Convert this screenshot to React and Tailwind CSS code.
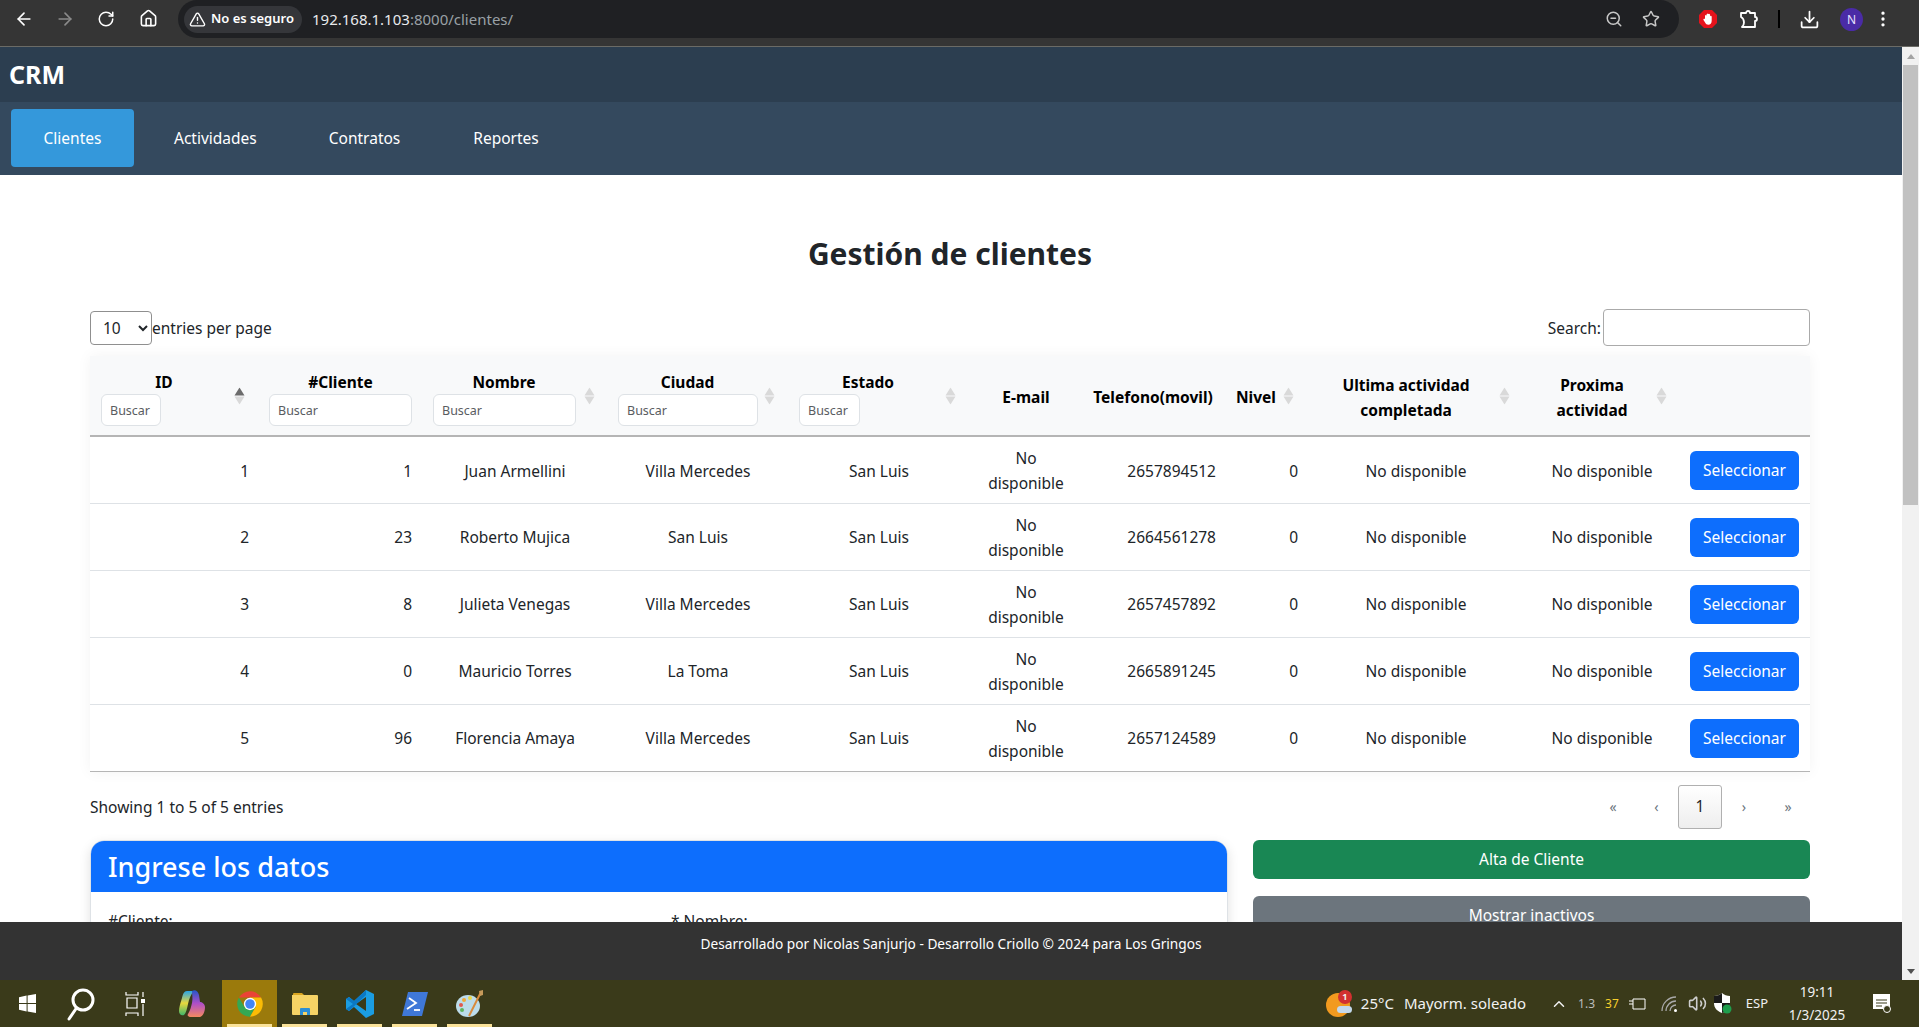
import React from "react";
import { ArrowLeft, ArrowRight, RotateCw, Home, TriangleAlert, ZoomOut, Star, Download, EllipsisVertical, ChevronUp, Volume2 } from "lucide-react";

const clients = [
  { id: 1, num: 1, name: "Juan Armellini", city: "Villa Mercedes", phone: "2657894512" },
  { id: 2, num: 23, name: "Roberto Mujica", city: "San Luis", phone: "2664561278" },
  { id: 3, num: 8, name: "Julieta Venegas", city: "Villa Mercedes", phone: "2657457892" },
  { id: 4, num: 0, name: "Mauricio Torres", city: "La Toma", phone: "2665891245" },
  { id: 5, num: 96, name: "Florencia Amaya", city: "Villa Mercedes", phone: "2657124589" },
];

function SortIcon({ active, right = "right-[12px]" }) {
  return (
    <svg width="11" height="17" viewBox="0 0 11 17" className={`absolute ${right} top-1/2 -translate-y-1/2`}>
      <path d="M5.5 0 L10.5 8 L0.5 8 Z" fill={active ? "#6c6c6c" : "#d9d9d9"} />
      <path d="M5.5 17 L10.5 9 L0.5 9 Z" fill="#d9d9d9" />
    </svg>
  );
}

function FilterHead({ label, inputW, pl, pr = "pr-[34px]", sort, active, right }) {
  return (
    <th className={`relative ${pl} ${pr} align-top pt-[14px] font-bold`}>
      <div className="leading-[24px] text-center">{label}</div>
      <input placeholder="Buscar" className={`block ${inputW} h-[32px] bg-white border border-[#dee2e6] rounded-[6px] px-[8px] text-[12.5px] font-normal placeholder:text-[#595c5f]`} />
      {sort && <SortIcon active={active} right={right} />}
    </th>
  );
}

function TextHead({ children, sort, right }) {
  return (
    <th className={`relative font-bold pl-[10px] pt-[4px] leading-[25px] align-middle ${sort ? "pr-[30px]" : "pr-[10px]"}`}>
      {children}
      {sort && <SortIcon right={right} />}
    </th>
  );
}

function ChromeBar() {
  return (
    <div className="h-[47px] shrink-0 flex bg-[#353535] border-b border-[#6b6b66] text-white">
      <div className="flex items-start pt-[9px] w-[178px]">
        <ArrowLeft size={20} className="ml-[14px]" />
        <ArrowRight size={20} className="ml-[21px] text-[#8a8a8a]" />
        <RotateCw size={18} className="ml-[22px] mt-px" />
        <Home size={19} className="ml-[24px]" />
      </div>
      <div className="w-[1501px] h-[38px] bg-[#1f2023] rounded-[19px] flex items-center pl-[6px] pr-[19px]">
        <div className="h-[27px] w-[118px] rounded-[14px] bg-[#35363a] flex items-center pl-[5px] gap-[5px] text-[13px] font-semibold">
          <TriangleAlert size={17} />
          <span>No es seguro</span>
        </div>
        <div className="ml-[10px] text-[15px] text-[#e8eaed]">
          192.168.1.103<span className="text-[#9aa0a6]">:8000/clientes/</span>
        </div>
        <ZoomOut size={18} className="ml-auto text-[#c7c7c7]" />
        <Star size={18} className="ml-[19px] text-[#c7c7c7]" />
      </div>
      <div className="flex-1 flex items-start pt-[9px] relative">
        <svg width="20" height="20" viewBox="0 0 20 20" className="ml-[19px]">
          <path d="M6 1h8l5 5v8l-5 5H6l-5-5V6z" fill="#e5131c" />
          <path d="M7 10V7a1 1 0 0 1 1.6-.6V5.3a1 1 0 0 1 1.8-.2 1 1 0 0 1 1.7.8v1.3a1 1 0 0 1 1.6.6v4c0 2.5-1.4 4-3.4 4-1.6 0-2.4-.8-3.2-2.2L5.5 11c-.5-1 .8-1.6 1.5-1z" fill="#fff" />
        </svg>
        <svg width="20" height="20" viewBox="0 0 20 20" fill="none" stroke="#fff" strokeWidth="1.8" strokeLinejoin="round" className="ml-[21px]">
          <path d="M2 4h5a2 2 0 0 1 4 0h5v4a2 2 0 0 1 0 4v6H3c1-1 2-3 2-4.500C5 11.500 4 9 2 8z" />
        </svg>
        <div className="w-[2px] h-[18px] bg-black ml-[19px] mt-[1px]" />
        <Download size={21} className="ml-[19px]" />
        <div className="ml-[20px] -mt-[1px] w-[23px] h-[23px] rounded-full bg-[#4a2ba6] flex items-center justify-center text-[12px] text-[#e6e0ff]">N</div>
        <EllipsisVertical size={20} className="ml-[10px]" />
      </div>
    </div>
  );
}

function Scrollbar() {
  return (
    <div className="w-[17px] shrink-0 bg-[#f1f1f1] flex flex-col items-center">
      <div className="h-[18px] flex items-center justify-center">
        <div className="w-0 h-0 border-x-[4px] border-x-transparent border-b-[5px] border-b-[#a3a3a3]" />
      </div>
      <div className="w-[15px] h-[440px] bg-[#c1c1c1]" />
      <div className="mt-auto h-[18px] flex items-center justify-center">
        <div className="w-0 h-0 border-x-[4px] border-x-transparent border-t-[5px] border-t-[#505050]" />
      </div>
    </div>
  );
}

function Table() {
  return (
    <div className="shadow-[0_0_14px_rgba(0,0,0,0.05)]">
      <table className="table-fixed w-full border-collapse text-[15.5px] text-[#212529]">
        <colgroup>
          <col className="w-[167px]" />
          <col className="w-[164px]" />
          <col className="w-[188px]" />
          <col className="w-[178px]" />
          <col className="w-[184px]" />
          <col className="w-[110px]" />
          <col className="w-[144px]" />
          <col className="w-[82px]" />
          <col className="w-[218px]" />
          <col className="w-[154px]" />
          <col className="w-[131px]" />
        </colgroup>
        <thead>
          <tr className="h-[80px] bg-[#f8f9fa] border-b-2 border-[#b5b5b5] text-black">
            <FilterHead label="ID" inputW="w-[60px]" pl="pl-[11px]" pr="pr-[30px]" sort active />
            <FilterHead label="#Cliente" inputW="w-[143px]" pl="pl-[12px]" pr="pr-[9px]" />
            <FilterHead label="Nombre" inputW="w-[143px]" pl="pl-[12px]" sort right="right-[14px]" />
            <FilterHead label="Ciudad" inputW="w-[140px]" pl="pl-[9px]" pr="pr-[30px]" sort />
            <FilterHead label="Estado" inputW="w-[61px]" pl="pl-[12px]" sort right="right-[15px]" />
            <TextHead>E-mail</TextHead>
            <TextHead>Telefono(movil)</TextHead>
            <TextHead sort right="right-[13px]">Nivel</TextHead>
            <TextHead sort right="right-[15px]">Ultima actividad completada</TextHead>
            <TextHead sort>Proxima actividad</TextHead>
            <th></th>
          </tr>
        </thead>
        <tbody>
          {clients.map((c) => (
            <tr key={c.id} className="h-[67px] border-b border-[#dee2e6] last:border-[#b5b5b5] text-center">
              <td className="px-[8px] pt-[3px] text-right">{c.id}</td>
              <td className="px-[9px] pt-[3px] text-right">{c.num}</td>
              <td className="px-[9px] pt-[3px]">{c.name}</td>
              <td className="px-[9px] pt-[3px]">{c.city}</td>
              <td className="px-[9px] pt-[3px]">San Luis</td>
              <td className="px-[9px] pt-[2px] leading-[24.5px]">No disponible</td>
              <td className="px-[9px] pt-[3px] text-right">{c.phone}</td>
              <td className="px-[9px] pt-[3px] text-right">0</td>
              <td className="px-[9px] pt-[3px]">No disponible</td>
              <td className="px-[9px] pt-[3px]">No disponible</td>
              <td className="px-[10px] pt-[2px]">
                <button className="w-[109px] h-[39px] rounded-[6px] bg-[#0d6efd] text-white">Seleccionar</button>
              </td>
            </tr>
          ))}
        </tbody>
      </table>
    </div>
  );
}

function Pagination() {
  return (
    <div className="flex items-center text-[#6c757d] text-[14px]">
      <span className="w-[44px] text-center">«</span>
      <span className="w-[43px] text-center">‹</span>
      <span className="w-[44px] h-[44px] flex items-center justify-center border border-[#b0b0b0] rounded-[3px] bg-gradient-to-b from-white to-[#eeeeee] text-[#212529] text-[15.5px]">1</span>
      <span className="w-[44px] text-center">›</span>
      <span className="w-[44px] text-center">»</span>
    </div>
  );
}

function Page() {
  return (
    <div className="flex-1 min-h-0 overflow-hidden pl-[90px] pr-[92px] pt-[60px] text-[#212529]">
      <h1 className="text-[30px] leading-[38px] font-bold text-center">Gestión de clientes</h1>
      <div className="mt-[36px] h-[37px] flex items-center justify-between text-[15.5px]">
        <div className="flex items-center">
          <select className="w-[62px] h-[34px] px-[8px] bg-white border border-[#8f8f8f] rounded-[4px]">
            <option>10</option>
          </select>
          <span className="pt-[2px]">entries per page</span>
        </div>
        <div className="flex items-center gap-[2px]">
          <span className="pt-[2px]">Search:</span>
          <input className="w-[207px] h-[37px] border border-[#aaaaaa] rounded-[4px] bg-white" />
        </div>
      </div>
      <div className="mt-[10px]">
        <Table />
      </div>
      <div className="mt-[13px] flex items-center justify-between text-[15.5px]">
        <span className="pt-[2px]">Showing 1 to 5 of 5 entries</span>
        <Pagination />
      </div>
      <div className="mt-[11px] grid grid-cols-[1138px_557px] gap-[25px]">
        <div className="rounded-[14px] border border-[#dee2e6] shadow-[0_4px_12px_rgba(0,0,0,0.12)] overflow-hidden">
          <div className="h-[51px] pt-[2px] bg-[#0d6efd] text-white text-[27px] font-medium flex items-center px-[17px]">Ingrese los datos</div>
          <div className="grid grid-cols-2 px-[17px] pt-[18px] text-[15.5px]">
            <label>#Cliente:</label>
            <label className="pl-[12px]">* Nombre:</label>
          </div>
        </div>
        <div className="flex flex-col gap-[17px] text-white text-[15.5px]">
          <button className="h-[39px] pt-[2px] rounded-[6px] bg-[#198754]">Alta de Cliente</button>
          <button className="h-[39px] pt-[2px] rounded-[6px] bg-[#6c757d]">Mostrar inactivos</button>
        </div>
      </div>
    </div>
  );
}

function Taskbar() {
  const cls = "w-[55px] h-[47px] flex items-center justify-center relative";
  const bar = <div className="absolute bottom-0 left-[5px] right-[5px] h-[3px] bg-[#fbe39a]" />;
  return (
    <div className="h-[47px] shrink-0 bg-[#3a3a1a] flex items-center text-white">
      <div className="w-[54px] flex justify-center">
        <svg width="17" height="19" viewBox="0 0 17 19" fill="#fff">
          <path d="M0 3.2 7.6 1.6V9H0zM8.6 1.4 17 0v9H8.6zM0 10h7.6v7.4L0 15.8zM8.6 10H17v9l-8.4-1.4z" />
        </svg>
      </div>
      <div className="w-[54px] flex justify-center">
        <svg width="28" height="34" viewBox="0 0 28 34" fill="none" stroke="#fff" strokeWidth="3">
          <circle cx="16" cy="13" r="10" />
          <path d="M9.5 21 2 32" strokeLinecap="round" />
        </svg>
      </div>
      <div className="w-[54px] flex justify-center">
        <svg width="20" height="24" viewBox="0 0 20 24" fill="none" stroke="#fff" strokeWidth="1.2">
          <path d="M1 0v3h12V0M2 6h10v10H2zM1 24v-3h12v3M18 0v5M18 12v12" />
          <rect x="16" y="7" width="4" height="4" fill="#fff" stroke="none" />
        </svg>
      </div>
      <div className="w-[60px] flex justify-center">
        <svg width="28" height="30" viewBox="0 0 28 30">
          <defs>
            <linearGradient id="cpA" x1="0" y1="0" x2="0" y2="1">
              <stop offset="0" stopColor="#2aa5e8" />
              <stop offset="0.5" stopColor="#e8d83c" />
              <stop offset="1" stopColor="#3fb56c" />
            </linearGradient>
            <linearGradient id="cpB" x1="0" y1="0" x2="0" y2="1">
              <stop offset="0" stopColor="#2456c9" />
              <stop offset="0.5" stopColor="#b04fc7" />
              <stop offset="1" stopColor="#f4895f" />
            </linearGradient>
          </defs>
          <path d="M9 2h7c-3 3-5 8-6 13-1 5-2 9-4 11-3 1-5-1-5-4 0-3 1-7 3-13 1-4 2-7 5-7z" fill="url(#cpA)" />
          <path d="M14 2c3-2 6 0 7 4l1 7c2 0 5 2 5 5 0 5-2 9-5 10h-9c-3 0-4-2-3-3 2-3 3-7 4-11 1-5 0-9 0-12z" fill="url(#cpB)" />
        </svg>
      </div>
      <div className={`${cls} bg-[#9b7a0c]`}>
        <svg width="28" height="28" viewBox="0 0 24 24">
          <path d="M2.5 6.500A11 11 0 0 1 21.500 6.500L12 6.500Z" fill="#ea4335" />
          <path d="M2.5 6.500A11 11 0 0 0 12 23L16.800 14.500 7.200 14.500Z" fill="#34a853" />
          <path d="M21.500 6.500A11 11 0 0 1 12 23L16.800 14.500 12 6.500Z" fill="#fbbc05" />
          <circle cx="12" cy="12" r="5.300" fill="#fff" />
          <circle cx="12" cy="12" r="4.100" fill="#4285f4" />
        </svg>
        {bar}
      </div>
      <div className={cls}>
        <svg width="26" height="24" viewBox="0 0 26 24">
          <path d="M1 2a1 1 0 0 1 1-1h8l2 2h-11z" fill="#d9a520" />
          <path d="M0 3h25a1 1 0 0 1 1 1v18a1 1 0 0 1-1 1H1a1 1 0 0 1-1-1z" fill="#f6d365" />
          <path d="M8 23v-6a1 1 0 0 1 1-1h8a1 1 0 0 1 1 1v6h-3v-3h-4v3z" fill="#2d8fd5" />
        </svg>
        {bar}
      </div>
      <div className={cls}>
        <svg width="30" height="30" viewBox="0 0 30 30">
          <path d="M21 1 29 5V25L21 29 9 18 4 22 1 20V10L4 8 9 12z" fill="#1b9de2" />
          <path d="M21 8V22L11 15z" fill="#3a3a1a" />
          <path d="M21 1 9 12 4 8 1 10 8 15 1 20 4 22 21 6z" fill="#0b78c4" />
        </svg>
        {bar}
      </div>
      <div className={cls}>
        <svg width="28" height="26" viewBox="0 0 28 26">
          <path d="M7 1h20L21 25H1z" fill="#3f78d8" />
          <path d="M8 7l7 5-9 6" fill="none" stroke="#fff" strokeWidth="1.800" />
          <path d="M13 19h6" stroke="#fff" strokeWidth="1.800" />
        </svg>
        {bar}
      </div>
      <div className={cls}>
        <svg width="28" height="30" viewBox="0 0 28 30">
          <ellipse cx="12" cy="17" rx="12" ry="11" fill="#bcdcea" />
          <circle cx="5" cy="16" r="2" fill="#e05a4f" />
          <circle cx="8" cy="11" r="2" fill="#f0a93a" />
          <circle cx="14" cy="9" r="2" fill="#e9d84a" />
          <circle cx="6" cy="21" r="2" fill="#5fb55f" />
          <path d="M25 3 13 27" stroke="#d98a3c" strokeWidth="2" />
          <path d="M23 2l4-1 0 5-3 1z" fill="#c69a5a" />
        </svg>
        {bar}
      </div>
      <div className="ml-auto flex items-center text-[15px] text-[#f1f1f1]">
        <div className="relative w-[26px] h-[28px] mr-[9px]">
          <div className="absolute left-0 top-[3px] w-[24px] h-[24px] rounded-full bg-[#f29a1f]" />
          <div className="absolute right-0 bottom-[5px] w-[15px] h-[7px] rounded-full bg-[#c4d9ec]" />
          <div className="absolute right-0 top-0 w-[14px] h-[14px] rounded-full bg-[#d23030] text-[9px] font-bold flex items-center justify-center">1</div>
        </div>
        <span>25°C</span>
        <span className="ml-[10px]">Mayorm. soleado</span>
        <ChevronUp size={18} className="ml-[24px]" />
        <span className="ml-[10px] text-[12px] text-[#bdbdbd]">1.3</span>
        <span className="ml-[10px] text-[12px] text-[#f6cf2c]">37</span>
        <svg width="18" height="12" viewBox="0 0 18 12" fill="none" stroke="#fff" className="ml-[9px]">
          <path d="M5 1h12v10H5zM5 3H1M5 6H1" />
        </svg>
        <svg width="17" height="16" viewBox="0 0 17 16" fill="none" stroke="#a9a9a9" strokeWidth="1.300" className="ml-[15px]">
          <path d="M1 15A14 14 0 0 1 15 1M5 15A10 10 0 0 1 15 5M9 15a6 6 0 0 1 6-6" />
          <circle cx="14.500" cy="14.500" r="1.500" fill="#fff" stroke="none" />
        </svg>
        <Volume2 size={19} className="ml-[10px] text-[#cfcfcf]" />
        <svg width="18" height="21" viewBox="0 0 18 21" className="ml-[7px]">
          <path d="M8 0C6 2 3 3 0 3v7c0 5 3 8 8 10 5-2 8-5 8-10V3c-3 0-6-1-8-3z" fill="#fff" />
          <path d="M8 0v10H0v-7c3 0 6-1 8-3zM8 10h8c0 5-3 8-8 10z" fill="#1a1a1a" />
          <circle cx="13" cy="16" r="4.500" fill="#1f9d4d" />
        </svg>
        <span className="ml-[14px] text-[13px]">ESP</span>
        <div className="ml-[14px] w-[70px] text-center text-[13.5px] leading-[23px]">
          <div>19:11</div>
          <div>1/3/2025</div>
        </div>
        <svg width="20" height="22" viewBox="0 0 20 22" className="ml-[20px] mr-[27px]">
          <path d="M1 1h17v15H1z" fill="#fff" />
          <path d="M4 7h11M4 10h11M4 13h6" stroke="#3a3a1a" strokeWidth="1.200" />
          <circle cx="15" cy="16" r="3.500" fill="#3a3a1a" stroke="#fff" strokeWidth="1" />
        </svg>
      </div>
    </div>
  );
}

export default function App() {
  return (
    <div className="w-[1919px] h-[1027px] overflow-hidden flex flex-col bg-white font-['Noto_Sans',sans-serif]">
      <ChromeBar />
      <div className="flex-1 min-h-0 flex">
        <div className="flex-1 min-w-0 flex flex-col">
          <div className="h-[55px] shrink-0 bg-[#2c3e50] flex items-center pl-[9px] text-white text-[25px] font-bold">CRM</div>
          <nav className="h-[73px] shrink-0 bg-[#34495e] flex items-start pt-[7px] pl-[11px] text-white text-[15.5px]">
            <a className="w-[123px] h-[58px] rounded-[4px] bg-[#3498db] flex items-center justify-center pt-[2px]">Clientes</a>
            <a className="ml-[40px] h-[58px] pt-[2px] flex items-center">Actividades</a>
            <a className="ml-[72px] h-[58px] pt-[2px] flex items-center">Contratos</a>
            <a className="ml-[73px] h-[58px] pt-[2px] flex items-center">Reportes</a>
          </nav>
          <Page />
          <footer className="h-[58px] shrink-0 bg-[#333333] text-white text-[13.7px] flex items-center justify-center pb-[13px]">
            Desarrollado por Nicolas Sanjurjo - Desarrollo Criollo © 2024 para Los Gringos
          </footer>
        </div>
        <Scrollbar />
      </div>
      <Taskbar />
    </div>
  );
}
